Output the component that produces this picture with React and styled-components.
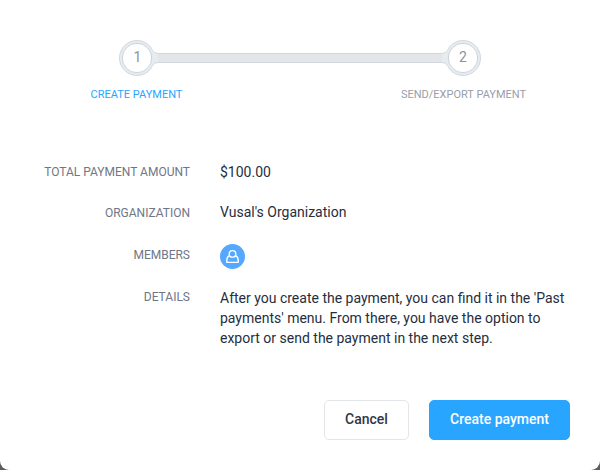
import React from "react";
import styled, { createGlobalStyle } from "styled-components";

const Global = createGlobalStyle`
  * { box-sizing: border-box; }
  html, body { margin: 0; background: #5c5c5c; }
  body { font-family: Roboto, "Open Sans", sans-serif; }
`;
const Dialog = styled.main`
  width: 600px; height: 470px; background: #fff; border-radius: 0 0 9px 9px;
  padding: 40px 30px 30px; display: flex; flex-direction: column;
`;
const StepperArt = styled.svg`
  display: block; width: 362px; height: 36px; margin-left: 89px; flex: none;
`;
const StepNumber = styled.text`
  font: 400 14px Roboto, sans-serif; fill: #8b92a1; text-anchor: middle;
`;
const StepLabels = styled.div`
  display: flex; justify-content: space-between; margin: 11px 36.5px 0;
  height: 16px; line-height: 16px; font-size: 11px;
`;
const StepLabel = styled.span`
  width: 140px; text-align: center; color: ${(p) => (p.$active ? "#28a5ff" : "#979eac")};
`;
const Details = styled.dl`
  margin: 59px 0 0; display: grid; grid-template-columns: 160px 350px; column-gap: 30px;
  grid-template-rows: 40px 42px 44px 60px; line-height: 20px;
`;
const Term = styled.dt`
  font-size: 12px; color: #6f7687; text-align: right; margin-top: ${(p) => p.$shift || 0}px;
`;
const Value = styled.dd`margin: 0; font-size: 14px; color: #252e3e;`;
const Avatar = styled.svg`display: block; width: 25px; height: 25px;`;
const Footer = styled.footer`display: flex; justify-content: flex-end; gap: 20px; margin-top: auto;`;
const Button = styled.button`
  height: 40px; width: ${(p) => (p.$primary ? 141 : 85)}px; padding: 0 0 2px; border-radius: 5px;
  border: 1px solid ${(p) => (p.$primary ? "#28a5ff" : "#e4e6e9")};
  background: ${(p) => (p.$primary ? "#28a5ff" : "#fff")}; color: ${(p) => (p.$primary ? "#fff" : "#303747")};
  font: 500 14px Roboto, sans-serif;
`;

function Stepper() {
  return (
    <StepperArt viewBox="0 0 362 36">
      <path
        d="M40 13.5H322C327 13.5 328.5 11 330.4 7A17.5 17.5 0 1 1 330.4 29C328.5 25 327 22.5 322 22.5H40C35 22.5 33.5 25 31.6 29A17.5 17.5 0 1 1 31.6 7C33.5 11 35 13.5 40 13.5Z"
        fill="#e6ecf0"
        stroke="#cfd8df"
      />
      <rect x="39" y="14" width="284" height="8" fill="#e4e5e8" />
      <circle cx="18" cy="18" r="14.7" fill="#fff" stroke="#cdd2db" />
      <circle cx="344" cy="18" r="14.7" fill="#fff" stroke="#cdd2db" />
      <StepNumber x="18.5" y="22">1</StepNumber>
      <StepNumber x="344" y="22">2</StepNumber>
    </StepperArt>
  );
}

function MemberAvatar() {
  return (
    <Avatar viewBox="0 0 25 25">
      <circle cx="12.5" cy="12.5" r="12.5" fill="#54a8ff" />
      <g fill="none" stroke="#fff" strokeWidth="1.35" strokeLinejoin="round">
        <circle cx="12.5" cy="9.9" r="3.3" />
        <path d="M9.6 11.6C7.7 12.4 6.8 14.2 6.8 16.4V18.3H18.2V16.4C18.2 14.2 17.3 12.4 15.4 11.6" />
      </g>
    </Avatar>
  );
}

export default function App() {
  return (
    <>
      <Global />
      <Dialog>
        <Stepper />
        <StepLabels>
          <StepLabel $active>CREATE PAYMENT</StepLabel>
          <StepLabel>SEND/EXPORT PAYMENT</StepLabel>
        </StepLabels>
        <Details>
          <Term>TOTAL PAYMENT AMOUNT</Term>
          <Value>$100.00</Value>
          <Term $shift={1}>ORGANIZATION</Term>
          <Value>Vusal's Organization</Value>
          <Term $shift={1}>MEMBERS</Term>
          <Value><MemberAvatar /></Value>
          <Term $shift={-1}>DETAILS</Term>
          <Value>
            After you create the payment, you can find it in the 'Past payments' menu. From there,
            you have the option to export or send the payment in the next step.
          </Value>
        </Details>
        <Footer>
          <Button>Cancel</Button>
          <Button $primary>Create payment</Button>
        </Footer>
      </Dialog>
    </>
  );
}
